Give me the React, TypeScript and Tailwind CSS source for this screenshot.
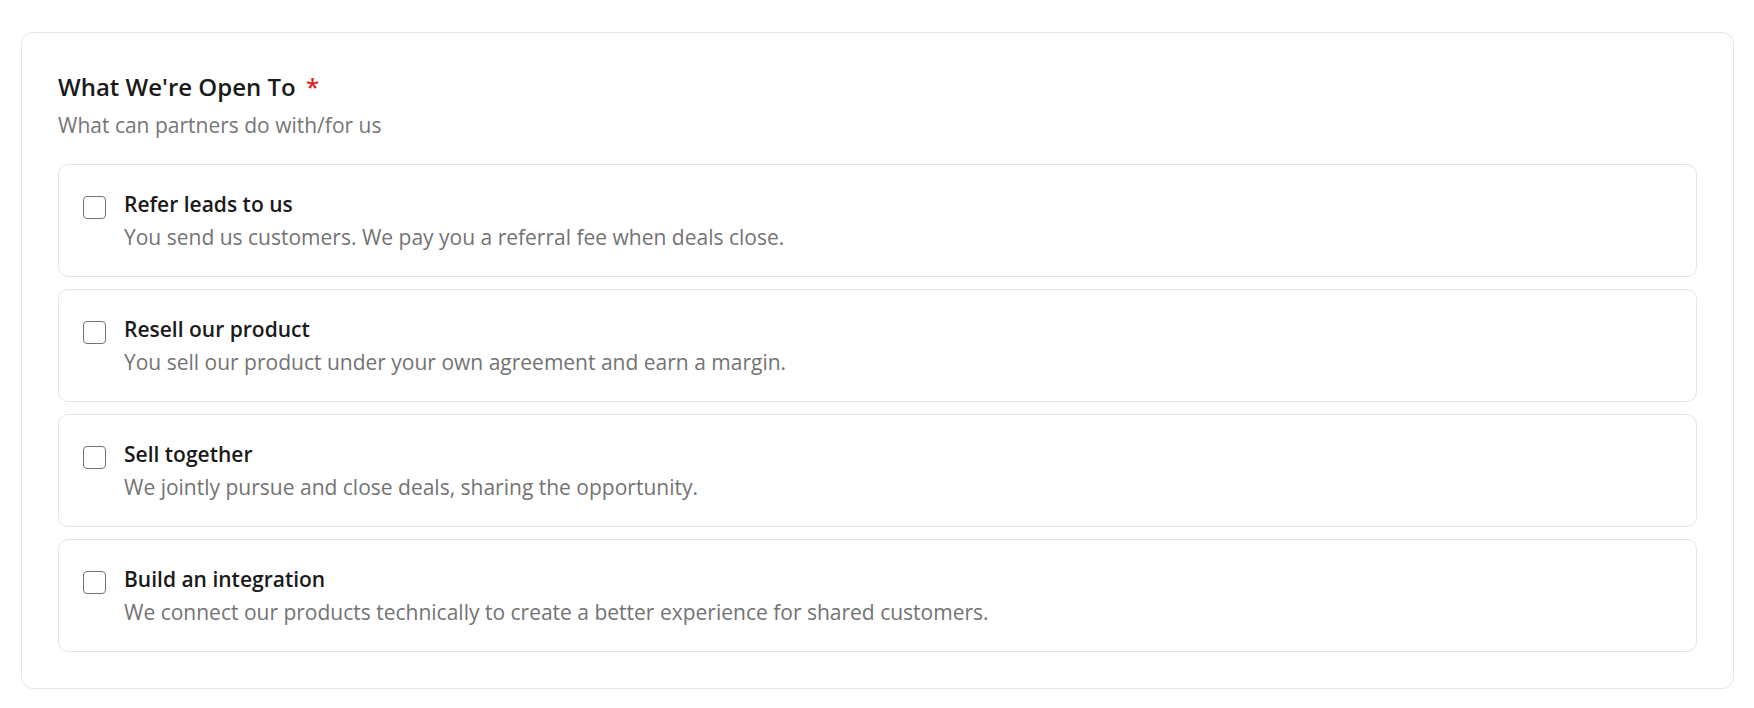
import { useState } from "react"

const OPTIONS = [
  {
    id: "refer",
    title: "Refer leads to us",
    desc: "You send us customers. We pay you a referral fee when deals close.",
  },
  {
    id: "resell",
    title: "Resell our product",
    desc: "You sell our product under your own agreement and earn a margin.",
  },
  {
    id: "cosell",
    title: "Sell together",
    desc: "We jointly pursue and close deals, sharing the opportunity.",
  },
  {
    id: "integrate",
    title: "Build an integration",
    desc: "We connect our products technically to create a better experience for shared customers.",
  },
]

export default function App() {
  const [picked, setPicked] = useState<string[]>([])

  function toggle(id: string) {
    setPicked((prev) => (prev.includes(id) ? prev.filter((x) => x !== id) : [...prev, id]))
  }

  return (
    <div className="min-h-screen bg-white pb-5 pl-[21px] pr-5 pt-[32px] font-['Open_Sans',sans-serif]">
      <section className="rounded-xl border border-[#e5e5e5] bg-white p-9">
        <h2 className="mt-0.5 text-[24px] font-semibold leading-8 text-[#1a1a1a]">
          What We're Open To <span className="ml-1 text-[#dc2626]">*</span>
        </h2>
        <p className="mt-2 text-[21px] leading-7 text-[#767676]">What can partners do with/for us</p>

        {/* Options */}
        <div className="mt-[25px] space-y-3">
          {OPTIONS.map((o) => {
            const on = picked.includes(o.id)
            return (
              <label
                key={o.id}
                className="flex cursor-pointer items-start gap-[18px] rounded-[10px] border border-[#e5e5e5] bg-white p-6"
              >
                <input
                  type="checkbox"
                  checked={on}
                  onChange={() => toggle(o.id)}
                  className="mt-[7px] h-[23px] w-[23px] shrink-0 cursor-pointer appearance-none rounded-[4px] border-[1.5px] border-[#737373] bg-white checked:border-[#1a1a1a] checked:bg-[#1a1a1a]"
                />
                <div>
                  <div className="text-[21px] font-semibold leading-[30px] text-[#1a1a1a]">{o.title}</div>
                  <div className="mt-[3px] text-[21px] leading-[30px] text-[#737373]">{o.desc}</div>
                </div>
              </label>
            )
          })}
        </div>
      </section>
    </div>
  )
}
